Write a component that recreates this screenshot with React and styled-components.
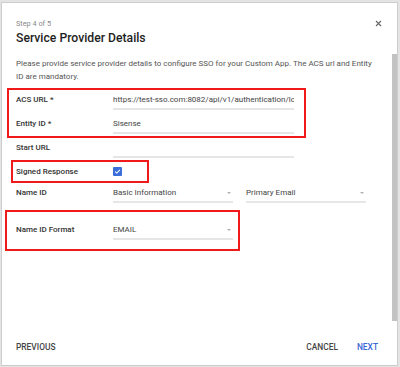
import React from 'react';
import styled, { createGlobalStyle } from 'styled-components';

const GlobalStyle = createGlobalStyle`
  html, body {
    margin: 0;
    padding: 0;
    background: #e4e4e4;
    font-family: Roboto, "Liberation Sans", Arial, sans-serif;
  }
  * { box-sizing: border-box; }
`;

const Panel = styled.div`
  display: flex;
  width: 397px;
  height: 364px;
  margin: 2px 0 0 1px;
  background: #fff;
  border: 1px solid #cdcdcd;
`;

const MainColumn = styled.div`
  flex: 1;
  display: flex;
  flex-direction: column;
  min-width: 0;
`;

const Header = styled.div`
  display: flex;
  justify-content: space-between;
  align-items: flex-start;
  padding: 16px 10px 0 14px;
`;

const StepText = styled.div`
  font-size: 7.3px;
  line-height: 10px;
  color: #8a8a8a;
`;

const Title = styled.h1`
  margin: 1px 0 0;
  font-size: 12.2px;
  line-height: 16px;
  font-weight: 500;
  color: #1e1e1e;
`;

const CloseButton = styled.button`
  width: 7px;
  height: 7px;
  margin-top: 1px;
  padding: 0;
  border: none;
  background: none;
  display: flex;
  cursor: pointer;
`;

const Body = styled.div`
  padding: 0 14px;
`;

const Intro = styled.p`
  margin: 11px 0 0;
  font-size: 8px;
  line-height: 13px;
  color: #555;
  max-width: 358px;
`;

const Highlight = styled.div`
  width: ${(p) => p.$width}px;
  margin: ${(p) => p.$top}px 0 0 -${(p) => p.$inset - 2}px;
  padding: ${(p) => p.$pad || 0}px 0 ${(p) => p.$pad || 0}px ${(p) => p.$inset - 4}px;
  border: 2px solid #f01a1a;
`;

const Row = styled.div`
  display: flex;
  align-items: ${(p) => (p.$center ? 'center' : 'baseline')};
  margin-top: ${(p) => p.$gap || 0}px;
  height: ${(p) => (p.$height ? `${p.$height}px` : 'auto')};
`;

const Label = styled.div`
  width: 97px;
  flex-shrink: 0;
  font-size: 8px;
  font-weight: 500;
  color: #333;
`;

const Field = styled.div`
  width: ${(p) => p.$width || 181}px;
  font-size: 8px;
  line-height: 12px;
  color: #444;
  padding: 4px 0 2px;
  border-bottom: 2px solid #e6e6e6;
  white-space: nowrap;
  overflow: hidden;
`;

const SelectBox = styled(Field)`
  width: 120px;
  display: flex;
  justify-content: space-between;
  align-items: center;
  padding-right: 2px;
  margin-right: ${(p) => p.$spacing || 0}px;
  overflow: visible;
`;

const Caret = styled.span`
  width: 0;
  height: 0;
  border-left: 2.5px solid transparent;
  border-right: 2.5px solid transparent;
  border-top: 2.5px solid #b0b0b0;
`;

const Checkbox = styled.span`
  width: 9px;
  height: 9px;
  border-radius: 1px;
  background: #3b6ed9;
  display: flex;
  align-items: center;
  justify-content: center;
`;

const Footer = styled.div`
  margin-top: auto;
  display: flex;
  justify-content: space-between;
  padding: 0 14px 12px;
`;

const Actions = styled.div`
  display: flex;
  gap: 19px;
`;

const TextButton = styled.button`
  border: none;
  background: none;
  padding: 0;
  font-family: inherit;
  font-size: 8.4px;
  line-height: 12px;
  font-weight: 500;
  color: ${(p) => (p.$primary ? '#3d66d8' : '#444')};
  cursor: pointer;
`;

const ScrollTrack = styled.div`
  width: 5px;
  padding-top: 51px;
`;

const ScrollThumb = styled.div`
  height: 267px;
  width: 4.5px;
  background: #c3c3c3;
`;

function Select({ value, spacing }) {
  return (
    <SelectBox $spacing={spacing}>
      <span>{value}</span>
      <Caret />
    </SelectBox>
  );
}

export default function App() {
  return (
    <>
      <GlobalStyle />
      <Panel>
        <MainColumn>
          <Header>
            <div>
              <StepText>Step 4 of 5</StepText>
              <Title>Service Provider Details</Title>
            </div>
            <CloseButton aria-label="close">
              <svg width="7" height="7" viewBox="0 0 7 7">
                <path d="M1 1L6 6M6 1L1 6" stroke="#666" strokeWidth="1.1" />
              </svg>
            </CloseButton>
          </Header>

          <Body>
            <Intro>
              Please provide service provider details to configure SSO for your Custom App. The ACS url and Entity ID are
              mandatory.
            </Intro>

            <Highlight $inset={11} $width={299} $top={4.5}>
              <Row>
                <Label>ACS URL *</Label>
                <Field>https://test-sso.com:8082/api/v1/authentication/login</Field>
              </Row>
              <Row $gap={4}>
                <Label>Entity ID *</Label>
                <Field>Sisense</Field>
              </Row>
              <div style={{ height: 2 }} />
            </Highlight>

            <Row>
              <Label>Start URL</Label>
              <Field>&nbsp;</Field>
            </Row>

            <Highlight $inset={7} $width={138} $top={2}>
              <Row $center $height={19}>
                <Label>Signed Response</Label>
                <Checkbox>
                  <svg width="7" height="7" viewBox="0 0 7 7">
                    <path d="M1.2 3.6L2.8 5.1L5.9 1.9" fill="none" stroke="#fff" strokeWidth="1.1" />
                  </svg>
                </Checkbox>
              </Row>
            </Highlight>

            <Row>
              <Label>Name ID</Label>
              <Select value="Basic Information" spacing={13} />
              <Select value="Primary Email" />
            </Row>

            <Highlight $inset={13} $width={235} $top={7} $pad={8.5}>
              <Row>
                <Label>Name ID Format</Label>
                <Select value="EMAIL" />
              </Row>
            </Highlight>
          </Body>

          <Footer>
            <TextButton>PREVIOUS</TextButton>
            <Actions>
              <TextButton>CANCEL</TextButton>
              <TextButton $primary>NEXT</TextButton>
            </Actions>
          </Footer>
        </MainColumn>
        <ScrollTrack>
          <ScrollThumb />
        </ScrollTrack>
      </Panel>
    </>
  );
}
